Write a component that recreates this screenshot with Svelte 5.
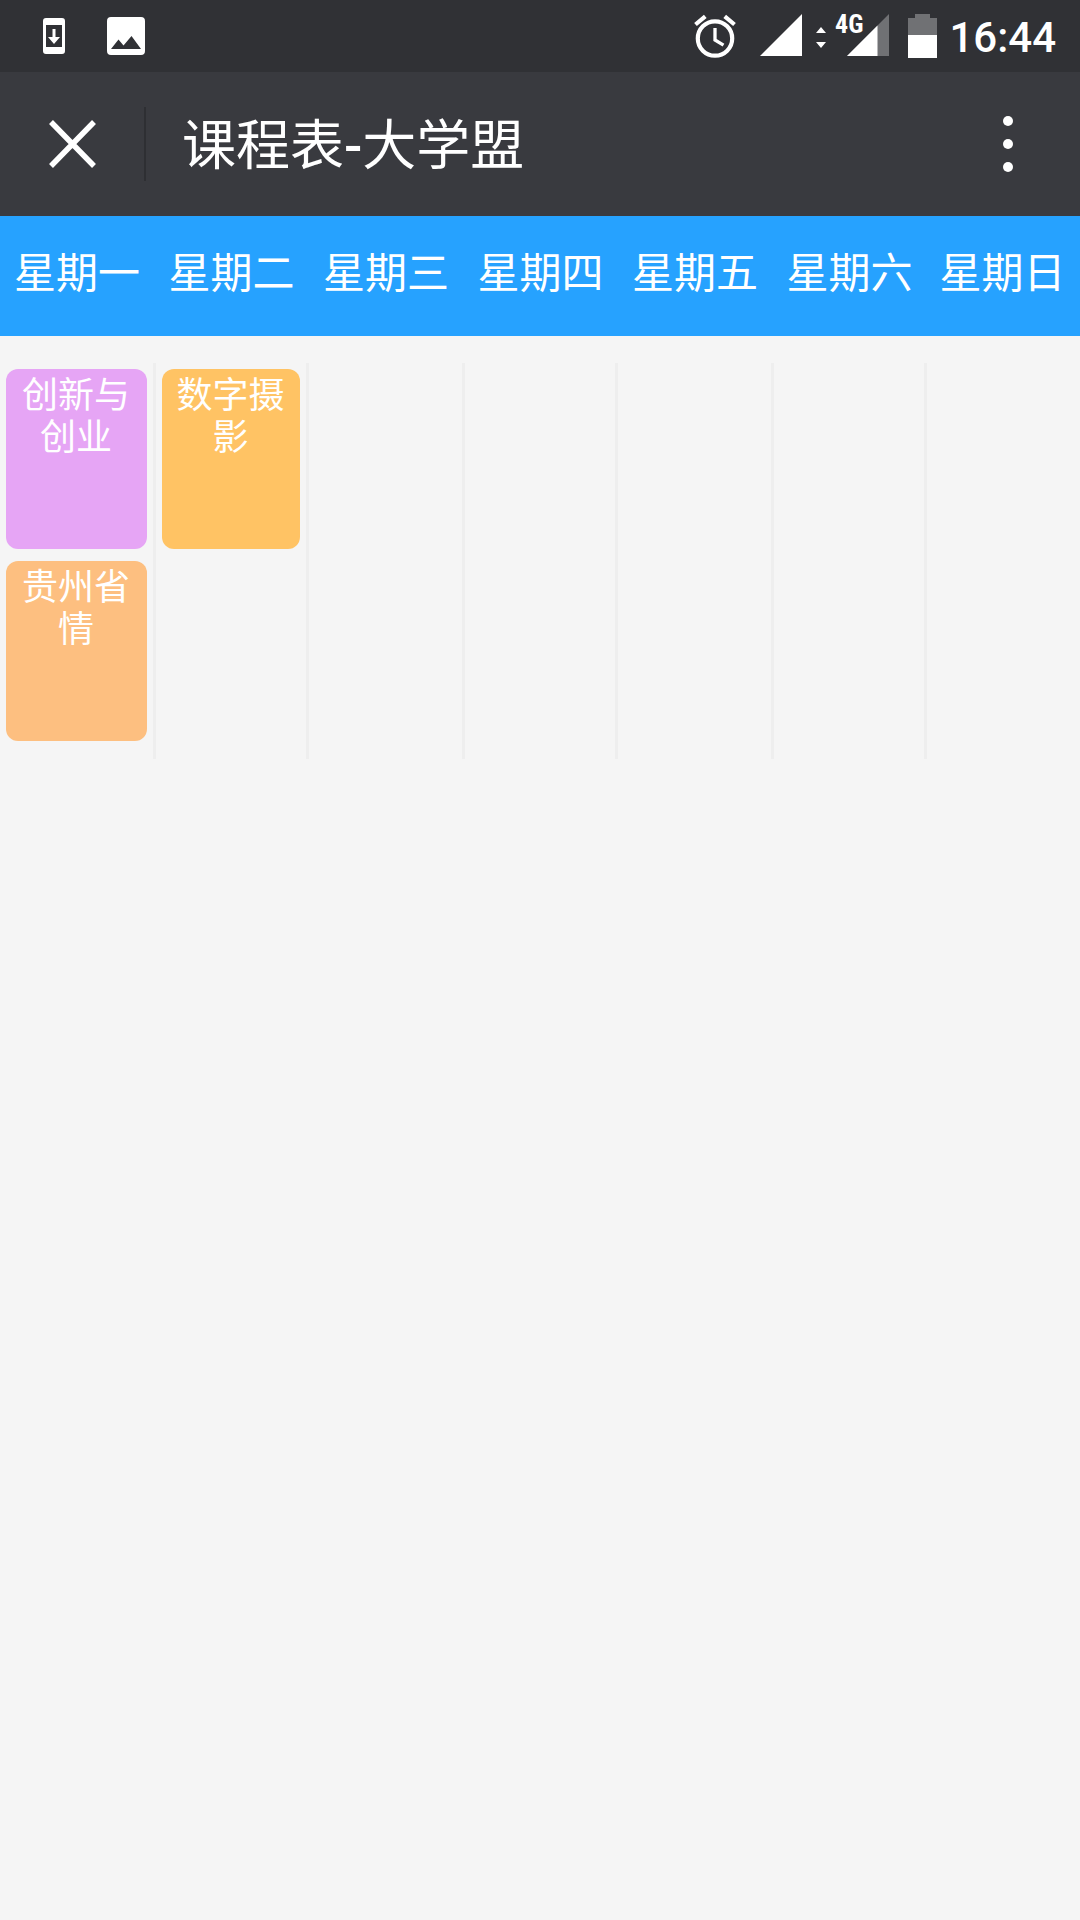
<script>
  const days = ['星期一', '星期二', '星期三', '星期四', '星期五', '星期六', '星期日'];

  // Each row is one block of lessons; null marks a free slot.
  const rows = [
    [
      { name: '创新与创业', tone: 'violet' },
      { name: '数字摄影', tone: 'amber' },
      null, null, null, null, null
    ],
    [{ name: '贵州省情', tone: 'peach' }, null, null, null, null, null, null]
  ];
</script>

<div class="status">
  <div class="notices">
    <svg width="22" height="72" viewBox="0 0 22 72" aria-hidden="true">
      <path fill="#fff" fill-rule="evenodd" d="M3 18H19Q22 18 22 21V51Q22 54 19 54H3Q0 54 0 51V21Q0 18 3 18ZM3 25V47H19V25ZM9.500 29H12.500V37H17L11 44L5 37H9.500Z" />
    </svg>
    <svg width="38" height="72" viewBox="0 0 38 72" aria-hidden="true">
      <path fill="#fff" fill-rule="evenodd" d="M4 17H34Q38 17 38 21V51Q38 55 34 55H4Q0 55 0 51V21Q0 17 4 17ZM4 49H34L24.500 36L16.500 45.500L11.500 39.500Z" />
    </svg>
  </div>
  <div class="system">
    <svg class="alarm" width="42" height="72" viewBox="0 0 42 72" fill="none" stroke="#fff" aria-hidden="true">
      <circle cx="21" cy="38.500" r="17.200" stroke-width="4.200" />
      <path d="M21 28V40L29.500 45.200" stroke-width="3.300" />
      <path d="M1.500 24.500L11.300 16.300M40.500 24.500L30.700 16.300" stroke-width="4.200" />
    </svg>
    <svg class="signal" width="42" height="72" viewBox="0 0 42 72" aria-hidden="true">
      <path fill="#fff" d="M42 14V56H0Z" />
    </svg>
    <svg class="arrows" width="10" height="72" viewBox="0 0 10 72" aria-hidden="true">
      <path fill="#fff" d="M5 27L10 33H0ZM0 42H10L5 48Z" />
    </svg>
    <svg class="mobile" width="53" height="72" viewBox="0 0 53 72">
      <path fill="#707174" d="M53 14V56H11Z" />
      <path fill="#fff" d="M41.500 25.500V56H11Z" />
      <text x="-1" y="33" stroke="#303135" stroke-width="3" paint-order="stroke">4G</text>
    </svg>
    <svg class="battery" width="29" height="72" viewBox="0 0 29 72" aria-hidden="true">
      <path fill="#707174" d="M7 14H22V18H29V36H0V18H7Z" />
      <path fill="#fff" d="M0 35H29V58H0Z" />
    </svg>
    <time>16:44</time>
  </div>
</div>

<header>
  <button class="close" aria-label="关闭">
    <svg width="48" height="48" viewBox="0 0 48 48" aria-hidden="true">
      <path d="M3 2L46 46M46 2L3 46" stroke="#fff" stroke-width="5.500" />
    </svg>
  </button>
  <h1>课程表<span>-</span>大学盟</h1>
  <button class="more" aria-label="更多">
    <svg width="10" height="56" viewBox="0 0 10 56" fill="#fff" aria-hidden="true">
      <circle cx="5" cy="5" r="5" />
      <circle cx="5" cy="28" r="5" />
      <circle cx="5" cy="51" r="5" />
    </svg>
  </button>
</header>

<table>
  <thead>
    <tr>
      {#each days as day}
        <th scope="col">{day}</th>
      {/each}
    </tr>
  </thead>
  <tbody>
    {#each rows as row}
      <tr>
        {#each row as lesson}
          <td>
            {#if lesson}
              <div class="lesson {lesson.tone}">{lesson.name}</div>
            {/if}
          </td>
        {/each}
      </tr>
    {/each}
  </tbody>
</table>

<style>
  :global(body) {
    margin: 0;
    background: #f5f5f5;
    color: #fff;
    font-family: Roboto, 'Noto Sans CJK SC', sans-serif;
  }

  .status {
    display: flex;
    justify-content: space-between;
    height: 72px;
    padding: 0 24px 0 43px;
    background: #303135;
  }

  .notices,
  .system {
    display: flex;
    align-items: center;
  }

  .notices {
    gap: 42px;
  }

  .alarm {
    margin-right: 24px;
  }

  .signal {
    margin-right: 14px;
  }

  .arrows {
    margin-right: 10px;
  }

  .mobile {
    margin-right: 19px;
    overflow: visible;
  }

  .mobile text {
    fill: #fff;
    font-family: 'Roboto Condensed', Roboto, sans-serif;
    font-size: 26px;
    font-weight: 700;
  }

  .battery {
    margin-right: 12px;
  }

  time {
    padding-top: 4px;
    font-size: 42px;
    font-weight: 500;
    line-height: 60px;
  }

  header {
    display: flex;
    align-items: center;
    height: 144px;
    background: #393a3f;
  }

  button {
    display: flex;
    align-items: center;
    justify-content: center;
    padding: 0;
    border: 0;
    background: none;
  }

  .close {
    width: 146px;
    height: 74px;
    border-right: 2px solid #2e2f33;
  }

  h1 {
    flex: 1;
    margin: 0;
    padding: 6px 0 0 36px;
    font-size: 54px;
    font-weight: 400;
    line-height: 72px;
  }

  h1 span {
    font-weight: 500;
  }

  .more {
    width: 144px;
    height: 144px;
  }

  table {
    width: 100%;
    table-layout: fixed;
    border-spacing: 0;
    border-collapse: separate;
  }

  th,
  td {
    box-sizing: border-box;
  }

  th {
    height: 120px;
    padding: 0 2px 4px 0;
    background: #26a2ff;
    font-size: 42px;
    font-weight: 400;
    line-height: 60px;
    text-align: center;
    white-space: nowrap;
  }

  th:nth-child(odd) {
    width: 14.444%;
  }

  th:nth-child(even) {
    width: 14.167%;
  }

  th:last-child {
    width: auto;
  }

  tbody::before {
    content: '';
    display: table-row;
    height: 27px;
  }

  td {
    padding: 6px;
    border-right: 3px solid #eee;
    vertical-align: top;
  }

  td:last-child {
    border-right: 0;
  }

  tr:last-child td {
    padding-bottom: 18px;
  }

  .lesson {
    box-sizing: border-box;
    min-height: 180px;
    padding: 6px 1px 0 0;
    border-radius: 12px;
    font-size: 36px;
    line-height: 42px;
    text-align: center;
  }

  .violet {
    background: #e6a5f5;
  }

  .amber {
    background: #ffc364;
  }

  .peach {
    background: #fdbf80;
  }
</style>
